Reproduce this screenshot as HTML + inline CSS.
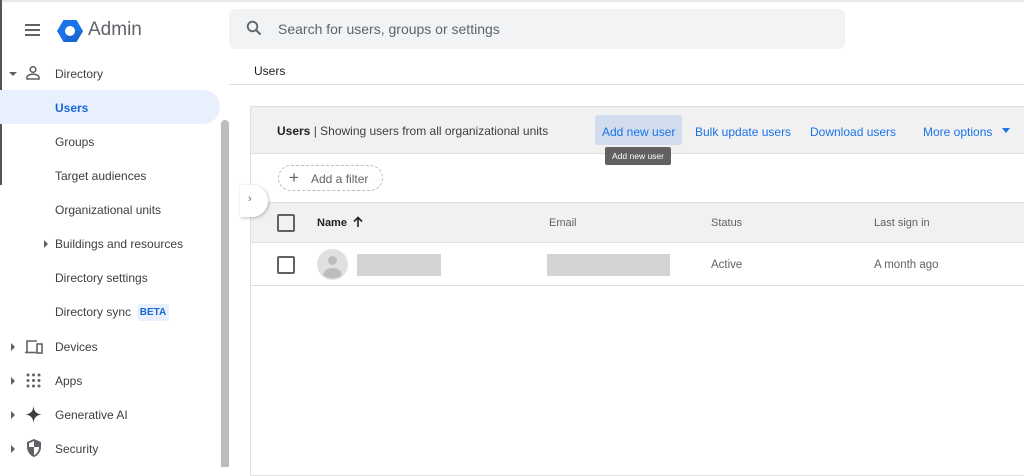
<!DOCTYPE html>
<html><head><style>
*{margin:0;padding:0;box-sizing:border-box}
body{width:1024px;height:467px;overflow:hidden;background:#fff;font-family:"Liberation Sans",sans-serif;position:relative;color:#3c4043}
.a{position:absolute;white-space:nowrap}
.nav{font-size:12px;color:#3c4043}
.lnk{font-size:12px;color:#1a73e8}
.th{font-size:11px;color:#5f6368}
</style></head><body>
<div class="a" style="left:0;top:0;width:1024px;height:2px;background:#e8e8e8"></div>
<div class="a" style="left:0;top:0;width:2px;height:185px;background:#555"></div>
<div class="a" style="left:25px;top:24px;width:15px;height:2px;background:#5f6368"></div>
<div class="a" style="left:25px;top:29px;width:15px;height:2px;background:#5f6368"></div>
<div class="a" style="left:25px;top:34px;width:15px;height:2px;background:#5f6368"></div>
<svg class="a" style="left:57px;top:19px" width="26" height="24" viewBox="0 0 26 24"><polygon points="6.5,1 19.5,1 26,12 19.5,23 6.5,23 0,12" fill="#1a73e8"/><polygon points="13,12 26,12 19.5,23 6.5,23" fill="#1967d2"/><circle cx="13" cy="12" r="5" fill="#fff"/></svg>
<div class="a" style="left:88px;top:19px;font-size:19px;color:#5f6368">Admin</div>
<div class="a" style="left:229px;top:9px;width:616px;height:40px;background:#f1f3f4;border-radius:6px"></div>
<svg class="a" style="left:246px;top:20px" width="16" height="16" viewBox="0 0 16 16"><circle cx="6.5" cy="6.5" r="4.8" fill="none" stroke="#5f6368" stroke-width="1.8"/><line x1="10" y1="10" x2="14.5" y2="14.5" stroke="#5f6368" stroke-width="2"/></svg>
<div class="a" style="left:278px;top:21px;font-size:14px;color:#5f6368">Search for users, groups or settings</div>
<div class="a" style="left:254px;top:64px;font-size:12px;color:#202124">Users</div>
<div class="a" style="left:229px;top:84px;width:795px;height:1px;background:#e0e0e0"></div>
<div class="a" style="left:0;top:90px;width:220px;height:34px;background:#e8f0fe;border-radius:0 17px 17px 0"></div>
<div class="a" style="left:221px;top:120px;width:8px;height:347px;background:#bdbdbd;border-radius:4px 4px 0 0"></div>
<div class="a" style="left:9px;top:72px;border-left:4px solid transparent;border-right:4px solid transparent;border-top:4px solid #5f6368"></div>
<svg class="a" style="left:25px;top:65px" width="16" height="16" viewBox="0 0 16 16"><circle cx="8" cy="4.5" r="2.8" fill="none" stroke="#5f6368" stroke-width="1.6"/><path d="M2 14v-1.5c0-2 3-3.3 6-3.3s6 1.3 6 3.3V14z" fill="none" stroke="#5f6368" stroke-width="1.6"/></svg>
<div class="a nav" style="left:55px;top:67px">Directory</div>
<div class="a nav" style="left:55px;top:101px;color:#1967d2;font-weight:bold">Users</div>
<div class="a nav" style="left:55px;top:135px">Groups</div>
<div class="a nav" style="left:55px;top:169px">Target audiences</div>
<div class="a nav" style="left:55px;top:203px">Organizational units</div>
<div class="a" style="left:44px;top:240px;border-top:4px solid transparent;border-bottom:4px solid transparent;border-left:4px solid #5f6368"></div>
<div class="a nav" style="left:55px;top:237px">Buildings and resources</div>
<div class="a nav" style="left:55px;top:271px">Directory settings</div>
<div class="a nav" style="left:55px;top:305px">Directory sync</div>
<div class="a" style="left:137px;top:304px;width:32px;height:17px;background:#e8f0fe;border-radius:3px;font-size:10px;font-weight:bold;color:#1967d2;text-align:center;line-height:17px">BETA</div>
<div class="a" style="left:11px;top:343px;border-top:4px solid transparent;border-bottom:4px solid transparent;border-left:4px solid #5f6368"></div>
<div class="a" style="left:11px;top:377px;border-top:4px solid transparent;border-bottom:4px solid transparent;border-left:4px solid #5f6368"></div>
<div class="a" style="left:11px;top:411px;border-top:4px solid transparent;border-bottom:4px solid transparent;border-left:4px solid #5f6368"></div>
<div class="a" style="left:11px;top:445px;border-top:4px solid transparent;border-bottom:4px solid transparent;border-left:4px solid #5f6368"></div>
<svg class="a" style="left:24px;top:338px" width="19" height="17" viewBox="0 0 19 17"><path d="M3 14V3h10" fill="none" stroke="#5f6368" stroke-width="1.6"/><line x1="1" y1="14.5" x2="12" y2="14.5" stroke="#5f6368" stroke-width="1.6"/><rect x="13" y="6" width="5" height="9" fill="none" stroke="#5f6368" stroke-width="1.6"/></svg>
<svg class="a" style="left:26px;top:373px" width="15" height="15" viewBox="0 0 15 15" fill="#5f6368"><circle cx="2" cy="2" r="1.5"/><circle cx="7.5" cy="2" r="1.5"/><circle cx="13" cy="2" r="1.5"/><circle cx="2" cy="7.5" r="1.5"/><circle cx="7.5" cy="7.5" r="1.5"/><circle cx="13" cy="7.5" r="1.5"/><circle cx="2" cy="13" r="1.5"/><circle cx="7.5" cy="13" r="1.5"/><circle cx="13" cy="13" r="1.5"/></svg>
<svg class="a" style="left:25px;top:406px" width="17" height="17" viewBox="0 0 17 17"><path d="M8.5 0C9 5 11 8 17 8.5C11 9 9 12 8.5 17C8 12 6 9 0 8.5C6 8 8 5 8.5 0z" fill="#3c4043"/></svg>
<svg class="a" style="left:26px;top:439px" width="16" height="18" viewBox="0 0 16 18"><path d="M8 0L1 3v5c0 4.5 3 8.5 7 10c4-1.5 7-5.5 7-10V3z" fill="#5f6368"/><path d="M8 2L3 4.2V8h5zM8 8v8.2c2.8-1.3 5-4.5 5-8.2z" fill="#fff"/></svg>
<div class="a nav" style="left:55px;top:340px">Devices</div>
<div class="a nav" style="left:55px;top:374px">Apps</div>
<div class="a nav" style="left:55px;top:408px">Generative AI</div>
<div class="a nav" style="left:55px;top:442px">Security</div>
<div class="a" style="left:250px;top:106px;width:780px;height:370px;border:1px solid #e0e0e0;background:#fff"></div>
<div class="a" style="left:251px;top:107px;width:773px;height:47px;background:#f1f1f1;border-bottom:1px solid #e0e0e0"></div>
<div class="a" style="left:277px;top:124px;font-size:12px;color:#3c4043"><b style="color:#202124">Users</b> | Showing users from all organizational units</div>
<div class="a" style="left:595px;top:115px;width:87px;height:30px;background:#d2dcef;border-radius:3px"></div>
<div class="a lnk" style="left:602px;top:125px">Add new user</div>
<div class="a lnk" style="left:695px;top:125px">Bulk update users</div>
<div class="a lnk" style="left:810px;top:125px">Download users</div>
<div class="a lnk" style="left:923px;top:125px">More options</div>
<div class="a" style="left:1002px;top:128px;border-left:4.5px solid transparent;border-right:4.5px solid transparent;border-top:5px solid #1a73e8"></div>
<div class="a" style="left:605px;top:147px;width:66px;height:18px;background:#616161;border-radius:2px;color:#fff;font-size:8.5px;text-align:center;line-height:18px">Add new user</div>
<div class="a" style="left:278px;top:165px;width:105px;height:26px;border:1px dashed #bdbdbd;border-radius:13px"></div>
<div class="a" style="left:289px;top:171px;font-size:17px;line-height:14px;color:#5f6368">+</div>
<div class="a" style="left:311px;top:172px;font-size:12px;color:#5f6368">Add a filter</div>
<div class="a" style="left:251px;top:202px;width:773px;height:41px;background:#f1f1f1;border-top:1px solid #e0e0e0;border-bottom:1px solid #e0e0e0"></div>
<div class="a" style="left:240px;top:185px;width:28px;height:32px;background:#fff;border-radius:0 16px 16px 0;box-shadow:1px 1px 3px rgba(0,0,0,.25)"></div>
<div class="a" style="left:248px;top:193px;font-size:11px;color:#5f6368">›</div>
<div class="a" style="left:277px;top:214px;width:18px;height:18px;border:2px solid #5f6368;border-radius:2px"></div>
<div class="a th" style="left:317px;top:217px;color:#202124;font-weight:bold">Name</div>
<svg class="a" style="left:353px;top:216px" width="10" height="12" viewBox="0 0 10 12"><path d="M5 11V2M1 5.5L5 1.5 9 5.5" fill="none" stroke="#202124" stroke-width="1.6"/></svg>
<div class="a th" style="left:549px;top:217px">Email</div>
<div class="a th" style="left:711px;top:217px">Status</div>
<div class="a th" style="left:874px;top:217px">Last sign in</div>
<div class="a" style="left:251px;top:285px;width:773px;height:1px;background:#e0e0e0"></div>
<div class="a" style="left:277px;top:256px;width:18px;height:18px;border:2px solid #5f6368;border-radius:2px"></div>
<svg class="a" style="left:317px;top:249px" width="31" height="31" viewBox="0 0 31 31"><circle cx="15.5" cy="15.5" r="15.5" fill="#e0e0e0"/><circle cx="15.5" cy="11.5" r="4.5" fill="#bdbdbd"/><path d="M6 26c1-5 5-7 9.5-7s8.5 2 9.5 7a15 15 0 0 1-19 0z" fill="#bdbdbd"/></svg>
<div class="a" style="left:357px;top:254px;width:84px;height:22px;background:#d4d4d4"></div>
<div class="a" style="left:547px;top:254px;width:123px;height:22px;background:#d4d4d4"></div>
<div class="a" style="left:711px;top:259px;font-size:11.5px;color:#5f6368">Active</div>
<div class="a" style="left:874px;top:259px;font-size:11.5px;color:#5f6368">A month ago</div>
</body></html>
